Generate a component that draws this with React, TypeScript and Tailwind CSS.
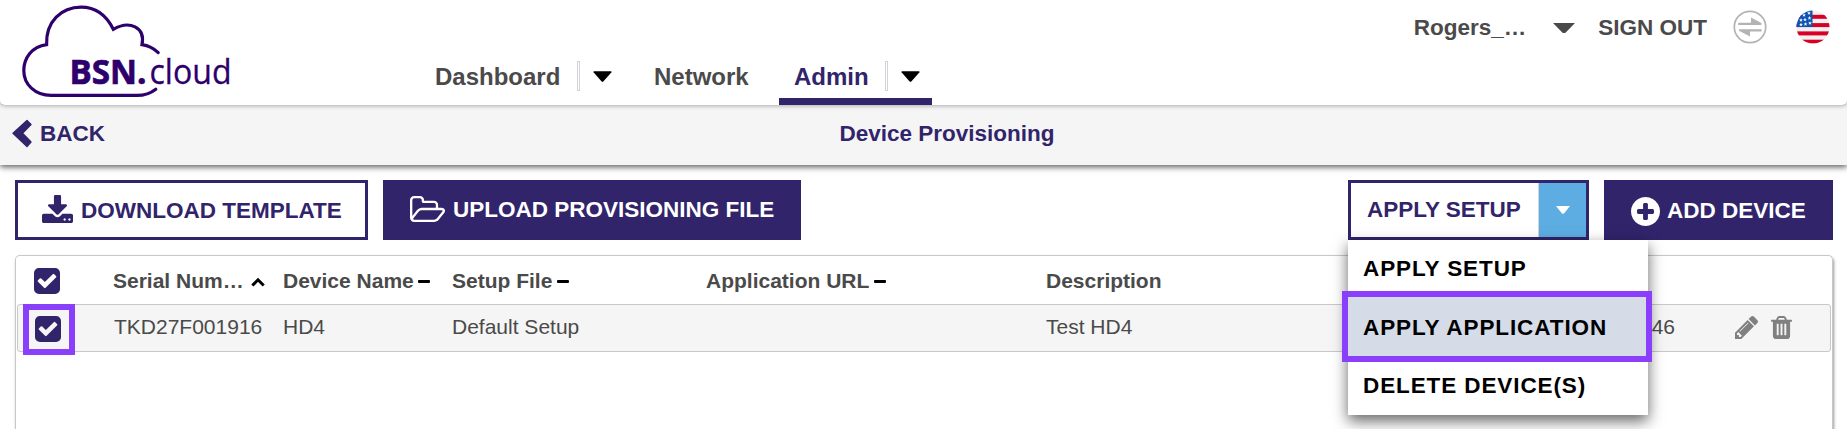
import React from "react";

const PATHS = {
  check:
    "M813 1299l614-614q19-19 19-45t-19-45l-102-102q-19-19-45-19t-45 19l-467 467-211-211q-19-19-45-19t-45 19l-102 102q-19 19-19 45t19 45l358 358q19 19 45 19t45-19zm851-883v960q0 119-84.5 203.5t-203.5 84.5h-960q-119 0-203.5-84.5t-84.5-203.5v-960q0-119 84.5-203.5t203.5-84.5h960q119 0 203.5 84.5t84.5 203.5z",
  download:
    "M1344 1344q0-26-19-45t-45-19-45 19-19 45 19 45 45 19 45-19 19-45zm256 0q0-26-19-45t-45-19-45 19-19 45 19 45 45 19 45-19 19-45zm128-224v320q0 40-28 68t-68 28h-1472q-40 0-68-28t-28-68v-320q0-40 28-68t68-28h465l135 136q58 56 136 56t136-56l136-136h464q40 0 68 28t28 68zm-325-569q17 41-14 70l-448 448q-18 19-45 19t-45-19l-448-448q-31-29-14-70 17-39 59-39h256v-448q0-26 19-45t45-19h256q26 0 45 19t19 45v448h256q42 0 59 39z",
  folder:
    "M1845 931q0-35-53-35h-1088q-40 0-85.5 21.5t-71.5 52.5l-294 363q-18 24-18 40 0 35 53 35h1088q40 0 86-22t71-53l294-363q18-22 18-39zm-1141-163h768v-160q0-40-28-68t-68-28h-576q-40 0-68-28t-28-68v-64q0-40-28-68t-68-28h-320q-40 0-68 28t-28 68v853l256-315q44-53 116-87.5t140-34.5zm1269 163q0 62-46 120l-295 363q-43 53-116 87.5t-140 34.5h-1088q-92 0-158-66t-66-158v-960q0-92 66-158t158-66h320q92 0 158 66t66 158v32h544q92 0 158 66t66 158v160h192q54 0 99 24.5t67 70.5q15 32 15 68z",
  plus:
    "M1344 960v-128q0-26-19-45t-45-19h-256v-256q0-26-19-45t-45-19h-128q-26 0-45 19t-19 45v256h-256q-26 0-45 19t-19 45v128q0 26 19 45t45 19h256v256q0 26 19 45t45 19h128q26 0 45-19t19-45v-256h256q26 0 45-19t19-45zm320-64q0 209-103 385.5t-279.5 279.5-385.5 103-385.5-103-279.5-279.5-103-385.5 103-385.5 279.5-279.5 385.5-103 385.5 103 279.5 279.5 103 385.5z",
  pencil:
    "M491 1536l91-91-235-235-91 91v107h128v128h107zm523-928q0-22-22-22-10 0-17 7l-542 542q-7 7-7 17 0 22 22 22 10 0 17-7l542-542q7-7 7-17zm-54-192l416 416-832 832h-416v-416zm683 96q0 53-37 90l-166 166-416-416 166-165q36-38 90-38 53 0 91 38l235 234q37 39 37 91z",
  trash:
    "M704 1376v-704q0-14-9-23t-23-9h-64q-14 0-23 9t-9 23v704q0 14 9 23t23 9h64q14 0 23-9t9-23zm256 0v-704q0-14-9-23t-23-9h-64q-14 0-23 9t-9 23v704q0 14 9 23t23 9h64q14 0 23-9t9-23zm256 0v-704q0-14-9-23t-23-9h-64q-14 0-23 9t-9 23v704q0 14 9 23t23 9h64q14 0 23-9t9-23zm-544-992h448l-48-117q-7-9-17-11h-317q-10 2-17 11zm928 32v64q0 14-9 23t-23 9h-96v948q0 83-47 143.5t-113 60.5h-832q-66 0-113-58.5t-47-141.5v-952h-96q-14 0-23-9t-9-23v-64q0-14 9-23t23-9h309l70-167q15-37 54-63t79-26h320q40 0 79 26t54 63l70 167h309q14 0 23 9t9 23z",
};

function Icon({ name, box, className }: { name: keyof typeof PATHS; box: string; className: string }) {
  return (
    <svg viewBox={box} className={`shrink-0 ${className}`} fill="currentColor" preserveAspectRatio="none">
      <path d={PATHS[name]} />
    </svg>
  );
}

function Logo() {
  return (
    <svg width="240" height="104" viewBox="0 0 240 104" className="shrink-0">
      <path
        d="M158.2 52.6C154 48.5 148.5 45.6 142 44.6C145.5 27 129.5 20 113.3 29.3C106 14.5 95.5 7.2 81 7.2C61.5 7.2 45.8 21.5 46.6 44.6C31.5 46.5 23.8 58.5 23.8 70.5C23.8 84.5 35 95.4 51 95.4H137C145 95.4 151 93 155.8 89.2"
        fill="none"
        stroke="#2e006c"
        strokeWidth="3.2"
        strokeLinecap="round"
      />
      <text x="69.5" y="83.6" textLength="77" lengthAdjust="spacingAndGlyphs" fill="#2e006c" stroke="#2e006c" strokeWidth="0.7" className="font-['Open_Sans',sans-serif] text-[34px] font-bold">
        BSN.
      </text>
      <text x="149.5" y="83.6" textLength="82" lengthAdjust="spacingAndGlyphs" fill="#2e006c" stroke="#2e006c" strokeWidth="0.3" className="font-['Open_Sans',sans-serif] text-[35px] font-normal">
        cloud
      </text>
    </svg>
  );
}

function Caret() {
  return (
    <svg width="19" height="11" viewBox="0 0 18 11" preserveAspectRatio="none" className="shrink-0">
      <path d="M1 0.3H17Q18 0.3 17.5 1.2L10 10.2Q9 11.3 8 10.2L0.5 1.2Q0 0.3 1 0.3Z" fill="#000" />
    </svg>
  );
}

function Divider() {
  return <span className="h-[30px] w-[3px] shrink-0 border border-[#d2d3d8]" />;
}

function SwapIcon() {
  return (
    <svg width="34" height="34" viewBox="0 0 34 34" className="shrink-0">
      <circle cx="17" cy="17" r="15.7" fill="none" stroke="#b3b3b3" strokeWidth="1.7" />
      <path d="M5.2 12.7H18V7.5L28.4 13V14.9H5.2ZM28.6 19.3V21.4H17V26.6L6 20.8V19.3Z" fill="#b3b3b3" />
    </svg>
  );
}

function Star({ x, y }: { x: number; y: number }) {
  return (
    <path
      transform={`translate(${x} ${y})`}
      d="M0-2L.6-.6L2-.6L.9.3L1.3 1.7L0 .9L-1.3 1.7L-.9.3L-2-.6L-.6-.6Z"
      fill="#f0f0f0"
    />
  );
}

const STARS = [[13, 3], [8, 5], [13.5, 8], [9, 9.5], [5, 10], [14, 13], [9.5, 14], [5, 14.5]];

function Flag() {
  return (
    <svg width="34" height="34" viewBox="0 0 34 34" className="shrink-0">
      <defs>
        <clipPath id="flag">
          <circle cx="17" cy="17" r="16.5" />
        </clipPath>
      </defs>
      <g clipPath="url(#flag)">
        <rect width="34" height="34" fill="#f0f0f0" />
        {[4.8, 13.1, 21.4, 29.7].map((y) => (
          <rect key={y} y={y} width="34" height="4" fill="#d80027" />
        ))}
        <rect width="16.5" height="17" fill="#0a52b4" />
        {STARS.map(([x, y]) => (
          <Star key={`${x}-${y}`} x={x} y={y} />
        ))}
      </g>
    </svg>
  );
}

function Dash() {
  return <span className="h-[3px] w-[12px] shrink-0 rounded-[1px] bg-black" />;
}

function Header() {
  return (
    <header className="relative z-10 flex h-[105px] items-start rounded-b-[5px] bg-white text-[22.5px] leading-[30px] font-bold text-[#4a4a4a] shadow-[0_1px_4px_rgba(0,0,0,0.3)]">
      <Logo />
      <nav className="flex h-[105px] items-end pl-[195px] text-[24px]">
        <div className="flex h-[44px] w-[179px] items-start">
          <span className="w-[142px] pt-px">Dashboard</span>
          <span className="flex h-[30px] items-center">
            <Divider />
            <span className="pl-[13px]"><Caret /></span>
          </span>
        </div>
        <span className="ml-[40px] h-[44px] w-[125px] pt-px">Network</span>
        <div className="flex h-[44px] w-[153px] items-start border-b-[7px] border-[#31246b] pl-[15px] text-[#31246b]">
          <span className="w-[91px] pt-px">Admin</span>
          <span className="flex h-[30px] items-center">
            <Divider />
            <span className="pl-[13px]"><Caret /></span>
          </span>
        </div>
      </nav>
      <div className="ml-auto flex items-start pt-[10px] pr-[17px]">
        <span className="pt-[3px]">Rogers_…</span>
        <svg width="22" height="11" viewBox="0 0 22 11" className="mt-[13px] ml-[27px] shrink-0">
          <path d="M0 0H22L13 9.2Q11 11 9 9.2Z" fill="#4a4a4a" />
        </svg>
        <span className="ml-[23px] pt-[3px]">SIGN OUT</span>
        <span className="ml-[26px]"><SwapIcon /></span>
        <span className="ml-[29px]"><Flag /></span>
      </div>
    </header>
  );
}

function SubHeader() {
  return (
    <div className="relative flex h-[60px] items-start justify-center bg-[#f5f5f5] pt-[14px] text-[22.5px] leading-[30px] font-bold text-[#31246b] shadow-[0_2px_6px_rgba(0,0,0,0.65)]">
      <div className="flex flex-1 items-start pl-[12px]">
        <svg width="20" height="30" viewBox="0 0 20 30" className="shrink-0">
          <path d="M15 1.5L19 5.5L10.5 14.2L19 23L15 27.6L1 14.2Z" fill="#31246b" stroke="#31246b" strokeWidth="1.4" strokeLinejoin="round" />
        </svg>
        <span className="pl-[8px]">BACK</span>
      </div>
      <h1 className="pl-[35px]">Device Provisioning</h1>
      <div className="flex-1" />
    </div>
  );
}

function Menu() {
  return (
    <ul className="absolute top-[60px] left-0 z-20 flex h-[175px] w-[300px] flex-col bg-white text-[22.5px] leading-[30px] tracking-[0.9px] text-black shadow-[0_6px_14px_rgba(0,0,0,0.6)]">
      <li className="h-[51px] pt-[14px] pl-[15px]">APPLY SETUP</li>
      <li className="-mr-[4px] -ml-[6px] h-[71px] border-[6px] border-[#8a3ffc] bg-[#d5dce8] pt-[16px] pl-[15px]">APPLY APPLICATION</li>
      <li className="pt-[9px] pl-[15px]">DELETE DEVICE(S)</li>
    </ul>
  );
}

function Toolbar() {
  return (
    <div className="flex h-[60px] text-[22.5px] leading-[30px] font-bold">
      <button className="flex w-[353px] items-start border-[3px] border-[#31246b] bg-white pl-[24px] text-[#31246b]">
        <Icon name="download" box="64 0 1664 1536" className="mt-[12px] h-[28px] w-[31px]" />
        <span className="pt-[13px] pl-[8px] whitespace-nowrap">DOWNLOAD TEMPLATE</span>
      </button>
      <button className="ml-[15px] flex w-[418px] items-start bg-[#31246b] pl-[27px] text-white">
        <Icon name="folder" box="64 128 1909 1408" className="mt-[16px] h-[26px] w-[35px]" />
        <span className="pt-[15px] pl-[8px] whitespace-nowrap">UPLOAD PROVISIONING FILE</span>
      </button>
      <div className="relative ml-auto flex w-[241px] border-[3px] border-[#31246b] bg-white">
        <span className="w-[187px] pt-[12px] pl-[16px] whitespace-nowrap text-[#31246b]">APPLY SETUP</span>
        <span className="flex flex-1 items-center justify-center border-l border-[#d2d3d8] bg-[#5dade2]">
          <svg width="14" height="8" viewBox="0 0 14 8"><path d="M0 0H14L8 7.4Q7 8.2 6 7.4Z" fill="#fff" /></svg>
        </span>
        <div className="absolute -top-[3px] -left-[3px]"><Menu /></div>
      </div>
      <button className="ml-[15px] flex w-[229px] items-start bg-[#31246b] pl-[27px] text-white">
        <Icon name="plus" box="128 128 1536 1536" className="mt-[17px] h-[29px] w-[29px]" />
        <span className="pt-[16px] pl-[7px] whitespace-nowrap">ADD DEVICE</span>
      </button>
    </div>
  );
}

function Table() {
  return (
    <div className="mt-[15px] flex-1 rounded-t-[5px] border border-b-0 border-[#c8c8c8] text-[21px] leading-[30px] text-[#4a4a4a] shadow-[1px_2px_3px_rgba(0,0,0,0.4)]">
      <div className="grid h-[48px] grid-cols-[97px_170px_169px_254px_340px_1fr] font-bold whitespace-nowrap">
        <span className="pt-[12px] pl-[18px]">
          <Icon name="check" box="128 128 1536 1536" className="h-[26px] w-[26px] text-[#31246b]" />
        </span>
        <span className="flex items-start pt-[10px]">
          Serial Num…
          <svg width="14" height="10" viewBox="0 0 14 10" className="mt-[11px] ml-[7px]">
            <path d="M1.3 8.5L7 2.8L12.7 8.5" fill="none" stroke="#000" strokeWidth="3" />
          </svg>
        </span>
        <span className="flex h-[40px] items-center gap-[4px] pt-[10px]">Device Name<Dash /></span>
        <span className="flex h-[40px] items-center gap-[5px] pt-[10px]">Setup File<Dash /></span>
        <span className="flex h-[40px] items-center gap-[5px] pt-[10px]">Application URL<Dash /></span>
        <span className="pt-[10px]">Description</span>
      </div>
      <div className="mx-px grid h-[48px] grid-cols-[96px_169px_169px_254px_340px_1fr_60px_155px] rounded-[3px] border border-[#c8c8c8] bg-[#f5f5f5] whitespace-nowrap">
        <span className="-mt-px ml-[5px] flex h-[51px] w-[52px] items-start border-[6px] border-[#8a3ffc] pt-[6px] pl-[6px]">
          <Icon name="check" box="128 128 1536 1536" className="h-[26px] w-[26px] text-[#31246b]" />
        </span>
        <span className="pt-[7px]">TKD27F001916</span>
        <span className="pt-[7px]">HD4</span>
        <span className="pt-[7px]">Default Setup</span>
        <span />
        <span className="pt-[7px]">Test HD4</span>
        <span className="pt-[7px] text-right">46</span>
        <span className="flex items-start pt-[11px] pl-[60px] text-[#808080]">
          <Icon name="pencil" box="128 149 1515 1515" className="h-[23px] w-[23px]" />
          <Icon name="trash" box="192 128 1408 1536" className="ml-[13px] h-[23px] w-[21px]" />
        </span>
      </div>
    </div>
  );
}

export default function App() {
  return (
    <div className="flex h-[429px] w-[1847px] flex-col overflow-hidden bg-white font-['Liberation_Sans',Arial,sans-serif]">
      <Header />
      <SubHeader />
      <main className="flex flex-1 flex-col px-[15px] pt-[15px] pr-[14px]">
        <Toolbar />
        <Table />
      </main>
    </div>
  );
}
